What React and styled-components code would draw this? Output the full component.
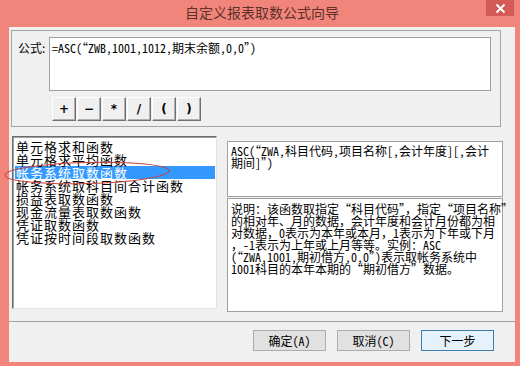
import React from 'react'
import styled, { createGlobalStyle } from 'styled-components'

const GlobalStyle = createGlobalStyle`
  html, body {
    margin: 0;
    padding: 0;
    background: #f2857b;
  }
  body {
    font-family: "Noto Sans CJK SC", "Liberation Sans", sans-serif;
  }
`

const MONO = `"Noto Sans Mono CJK SC", "Liberation Mono", "Noto Sans CJK SC", monospace`

const items = [
  '单元格求和函数',
  '单元格求平均函数',
  '帐务系统取数函数',
  '帐务系统取科目间合计函数',
  '损益表取数函数',
  '现金流量表取数函数',
  '凭证取数函数',
  '凭证按时间段取数函数',
]

const descLines = [
  '说明：该函数取指定“科目代码”，指定“项目名称”',
  '的相对年、月的数据，会计年度和会计月份都为相',
  '对数据，0表示为本年或本月，1表示为下年或下月',
  '，-1表示为上年或上月等等。实例：ASC',
  '(“ZWA,1001,期初借方,0,0”)表示取帐务系统中',
  '1001科目的本年本期的“期初借方”数据。',
]

function App() {
  return (
    <>
      <GlobalStyle />
      <Window>
        <TitleBar>
          <Title>自定义报表取数公式向导</Title>
          <CloseButton>
            <svg width="11" height="11" viewBox="0 0 11 11">
              <path d="M1.5 1.5 L9.5 9.5 M9.5 1.5 L1.5 9.5" stroke="#fff" strokeWidth="2" />
            </svg>
          </CloseButton>
        </TitleBar>
        <Client>
          <FormulaPanel>
            <Label>公式:</Label>
            <div>
              <FormulaBox>=ASC(“ZWB,1001,1012,期末余额,0,0”)</FormulaBox>
              <OpRow>
                {['+', '−', '*', '/', '(', ')'].map(op => (
                  <OpButton key={op}>{op}</OpButton>
                ))}
              </OpRow>
            </div>
          </FormulaPanel>
          <Lower>
            <ListBox>
              {items.map((t, i) => (
                <ListItem key={t} $selected={i === 2}>{t}</ListItem>
              ))}
            </ListBox>
            <RightCol>
              <SyntaxBox>
                <Line>ASC(“ZWA,科目代码,项目名称[,会计年度][,会计</Line>
                <Line>期间]”)</Line>
              </SyntaxBox>
              <DescBox>
                {descLines.map(l => <Line key={l}>{l}</Line>)}
              </DescBox>
            </RightCol>
          </Lower>
          <Footer>
            <DlgButton>确定(A)</DlgButton>
            <DlgButton>取消(C)</DlgButton>
            <DlgButton $default>下一步</DlgButton>
          </Footer>
        </Client>
        <Annotation width="170" height="26" viewBox="0 0 170 26">
          <ellipse cx="85" cy="13" rx="82" ry="10.5" fill="none" stroke="#c8403c" strokeWidth="1" transform="rotate(-1.5 85 13)" />
        </Annotation>
      </Window>
    </>
  )
}

const Window = styled.div`
  position: relative;
  width: 520px;
  height: 366px;
  background: #f2857b;
  display: flex;
  flex-direction: column;
  overflow: hidden;
`

const TitleBar = styled.div`
  height: 27px;
  display: flex;
  align-items: center;
  justify-content: center;
  position: relative;
`

const Title = styled.div`
  font-size: 14px;
  color: #5e3029;
  margin-top: -3px;
  margin-left: 4px;
`

const CloseButton = styled.div`
  position: absolute;
  top: 0;
  right: 6px;
  width: 28px;
  height: 16px;
  background: #d35a55;
  display: flex;
  align-items: center;
  justify-content: center;
`

const Client = styled.div`
  margin: 0 5px 4px 9px;
  flex: 1;
  background: #f0f0f0;
  display: flex;
  flex-direction: column;
  padding: 3px 0 0 2px;
`

const FormulaPanel = styled.div`
  width: 490px;
  height: 97px;
  border: 1px solid #a5a5a5;
  display: flex;
  padding: 6px 0 0 6px;
  box-sizing: border-box;
`

const Label = styled.div`
  font-size: 12px;
  color: #000;
  width: 31px;
  padding-top: 4px;
  line-height: 14px;
`

const FormulaBox = styled.div`
  width: 442px;
  height: 54px;
  box-sizing: border-box;
  border: 1px solid #a0a0a0;
  background: #fff;
  font-family: ${MONO};
  font-size: 12px;
  line-height: 14px;
  padding: 3px 2px;
  white-space: nowrap;
`

const OpRow = styled.div`
  display: flex;
  gap: 1px;
  margin: 6px 0 0 3px;
`

const OpButton = styled.div`
  width: 24px;
  height: 24px;
  box-sizing: border-box;
  background: #f0f0f0;
  border: 1px solid;
  border-color: #fff #707070 #707070 #fff;
  box-shadow: inset -1px -1px 0 #b0b0b0;
  display: flex;
  align-items: center;
  justify-content: center;
  font-family: "DejaVu Sans", sans-serif;
  font-weight: bold;
  font-size: 12px;
  color: #000;
`

const Lower = styled.div`
  display: flex;
  margin-top: 9px;
  height: 176px;
`

const ListBox = styled.div`
  width: 205px;
  height: 173px;
  margin-left: 1px;
  box-sizing: border-box;
  background: #fff;
  border: 1px solid;
  border-color: #6d6d6d #e3e3e3 #e3e3e3 #6d6d6d;
  box-shadow: inset 1px 1px 0 #a0a0a0;
  padding: 3px 1px 0 2px;
`

const ListItem = styled.div`
  font-size: 13px;
  letter-spacing: 1px;
  line-height: 13px;
  height: 13px;
  white-space: nowrap;
  padding-left: 1px;
  color: ${p => (p.$selected ? '#fff' : '#000')};
  background: ${p => (p.$selected ? '#3399ff' : 'transparent')};
`

const RightCol = styled.div`
  margin-left: 10px;
  width: 276px;
  display: flex;
  flex-direction: column;
  padding-top: 5px;
`

const TextBox = styled.div`
  box-sizing: border-box;
  background: #fff;
  border: 1px solid #a0a0a0;
  font-family: ${MONO};
  font-size: 12px;
  line-height: 12px;
  padding: 3px 3px;
  color: #000;
`

const SyntaxBox = styled(TextBox)`
  height: 56px;
`

const DescBox = styled(TextBox)`
  height: 114px;
  margin-top: 1px;
  padding-top: 4px;
`

const Line = styled.div`
  white-space: nowrap;
`

const Footer = styled.div`
  margin-top: 9px;
  margin-left: -2px;
  border-top: 1px solid #a0a0a0;
  display: flex;
  padding: 8px 0 0 244px;
  gap: 11px;
`

const DlgButton = styled.div`
  width: 73px;
  height: 21px;
  box-sizing: border-box;
  border: 1px solid ${p => (p.$default ? '#3c7fb1' : '#acacac')};
  background: ${p => (p.$default ? '#e5f1fb' : '#e1e1e1')};
  display: flex;
  align-items: center;
  justify-content: center;
  font-size: 12px;
  color: #000;
  font-family: ${MONO};
`

const Annotation = styled.svg`
  position: absolute;
  left: 2px;
  top: 160px;
  pointer-events: none;
`

export default App
